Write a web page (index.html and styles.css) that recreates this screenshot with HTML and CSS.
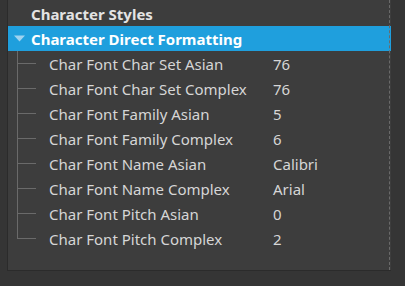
FILE: index.html
```html
<!DOCTYPE html>
<html>
<head>
<meta charset="utf-8">
<link rel="stylesheet" href="styles.css">
</head>
<body>
<div class="panel">
  <div class="tree">
    <div class="row root">
      <span class="toggle"></span>
      <span class="title">Character Styles</span>
    </div>
    <div class="row root selected">
      <span class="toggle"><svg width="11" height="7" viewBox="0 0 11 7"><path d="M0 0.5 H11 L5.5 6.5 Z" fill="#9fd3f0"/></svg></span>
      <span class="title">Character Direct Formatting</span>
    </div>
    <div class="row child"><span class="branch"></span><span class="label">Char Font Char Set Asian</span><span class="value">76</span></div>
    <div class="row child"><span class="branch"></span><span class="label">Char Font Char Set Complex</span><span class="value">76</span></div>
    <div class="row child"><span class="branch"></span><span class="label">Char Font Family Asian</span><span class="value">5</span></div>
    <div class="row child"><span class="branch"></span><span class="label">Char Font Family Complex</span><span class="value">6</span></div>
    <div class="row child"><span class="branch"></span><span class="label">Char Font Name Asian</span><span class="value">Calibri</span></div>
    <div class="row child"><span class="branch"></span><span class="label">Char Font Name Complex</span><span class="value">Arial</span></div>
    <div class="row child"><span class="branch"></span><span class="label">Char Font Pitch Asian</span><span class="value">0</span></div>
    <div class="row child last"><span class="branch"></span><span class="label">Char Font Pitch Complex</span><span class="value">2</span></div>
  </div>
  <div class="splitter"></div>
</div>
</body>
</html>
```
FILE: styles.css
```css
html, body {
  margin: 0;
  padding: 0;
  background: #353535;
  width: 405px;
  height: 286px;
  overflow: hidden;
}

body {
  font-family: "Noto Sans", "Open Sans", sans-serif;
  font-size: 15px;
  color: #dcdcdc;
}

.panel {
  position: relative;
  margin-left: 7px;
  width: 384px;
  height: 271px;
  background: #3d3d3d;
  border-left: 1px solid #2b2b2b;
  border-bottom: 1px solid #2b2b2b;
  box-sizing: border-box;
  padding-top: 1px;
}

.row {
  display: flex;
  align-items: center;
  height: 25px;
  white-space: nowrap;
}

.root .toggle {
  width: 23px;
  display: flex;
  justify-content: center;
}

.root .title {
  font-weight: bold;
  color: #e3e3e3;
}

.selected {
  background: #1f9fdd;
}

.selected .title {
  color: #ffffff;
}

.branch {
  align-self: stretch;
  width: 19px;
  margin-left: 9px;
  background:
    linear-gradient(#6a6a6a, #6a6a6a) 0 0 / 1px 100% no-repeat,
    linear-gradient(#6a6a6a, #6a6a6a) 0 12px / 19px 1px no-repeat;
}

.last .branch {
  background-size: 1px 13px, 19px 1px;
}

.label {
  width: 224px;
  padding-left: 13px;
  color: #d6d6d6;
}

.value {
  color: #d6d6d6;
}

.splitter {
  position: absolute;
  top: 0;
  bottom: 0;
  left: 381px;
  width: 0;
  border-left: 1px dashed #6a6a6a;
}
```
